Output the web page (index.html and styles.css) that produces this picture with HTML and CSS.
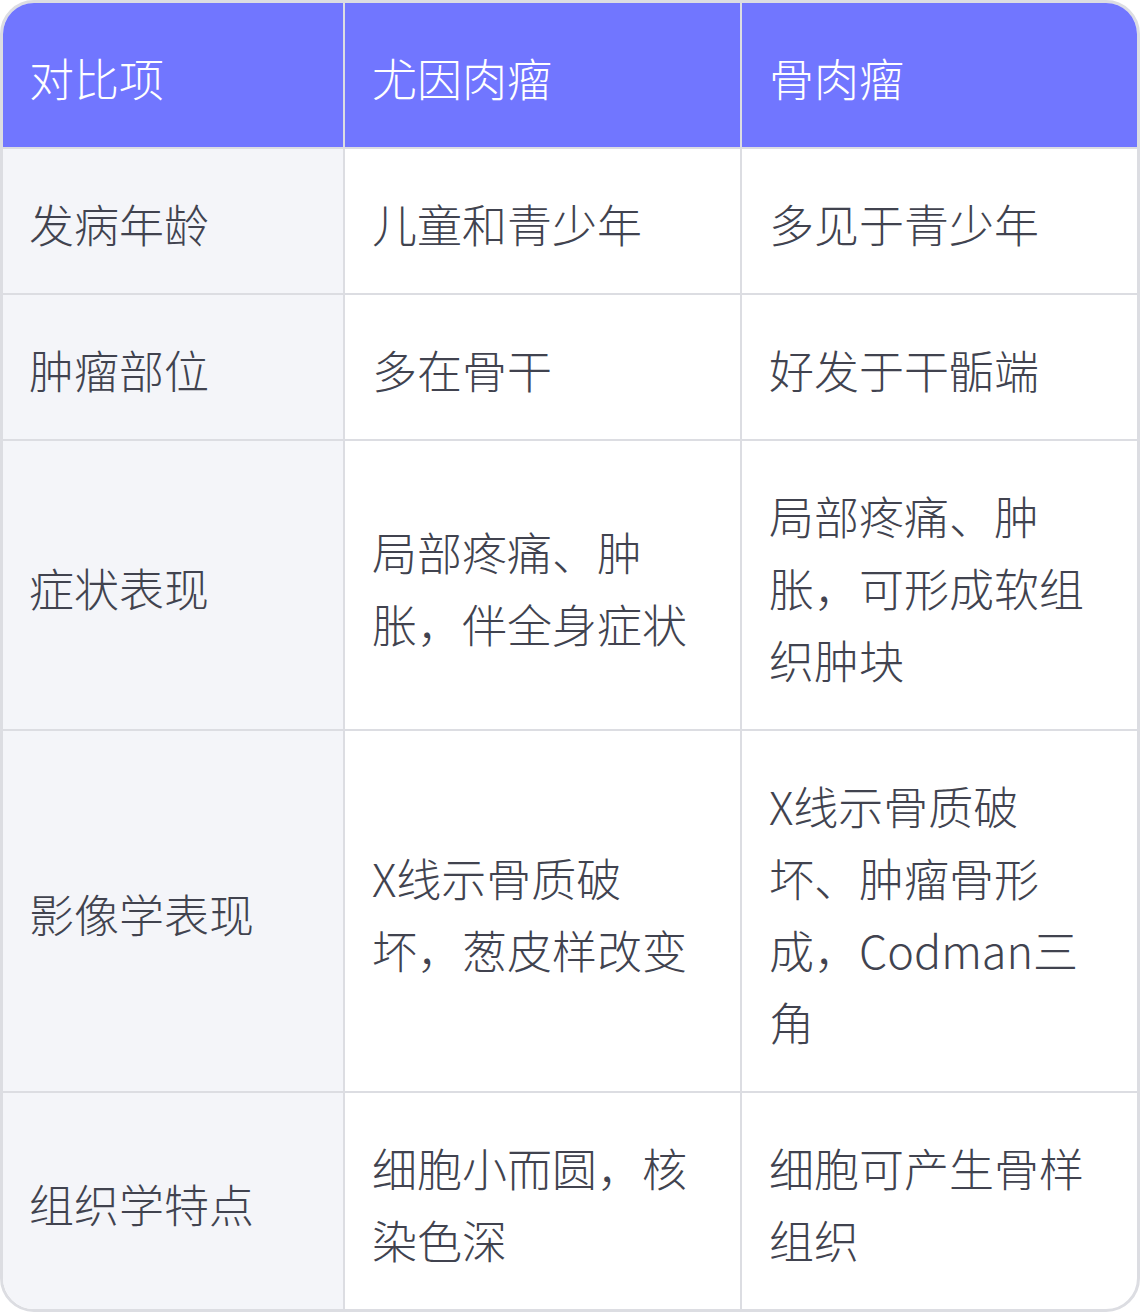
FILE: index.html
```html
<!DOCTYPE html>
<html lang="zh">
<head>
<meta charset="utf-8">
<link rel="stylesheet" href="styles.css">
</head>
<body>
<div class="wrap">
<table class="cmp">
<colgroup><col class="c1"><col class="c2"><col class="c3"></colgroup>
<thead>
<tr><th>对比项</th><th>尤因肉瘤</th><th>骨肉瘤</th></tr>
</thead>
<tbody>
<tr><td>发病年龄</td><td>儿童和青少年</td><td>多见于青少年</td></tr>
<tr><td>肿瘤部位</td><td>多在骨干</td><td>好发于干骺端</td></tr>
<tr><td>症状表现</td><td>局部疼痛、肿胀，伴全身症状</td><td>局部疼痛、肿胀，可形成软组织肿块</td></tr>
<tr><td>影像学表现</td><td>X线示骨质破坏，葱皮样改变</td><td>X线示骨质破坏、肿瘤骨形成，Codman三角</td></tr>
<tr><td>组织学特点</td><td>细胞小而圆，核染色深</td><td>细胞可产生骨样组织</td></tr>
</tbody>
</table>
</div>
</body>
</html>
```
FILE: styles.css
```css
html, body {
  margin: 0;
  padding: 0;
  background: #ffffff;
}
.wrap {
  width: 1140px;
  box-sizing: border-box;
  border: 3px solid #dcdde2;
  border-radius: 34px;
  overflow: hidden;
  background: #ffffff;
}
.cmp {
  width: 100%;
  border-collapse: collapse;
  table-layout: fixed;
  font-family: "Noto Sans CJK SC", "Noto Sans", sans-serif;
  font-weight: 300;
  font-size: 45px;
  line-height: 72px;
  color: #41434f;
}
.c1 { width: 341px; }
.c2 { width: 397px; }
.c3 { width: 396px; }
.cmp th, .cmp td {
  text-align: left;
  vertical-align: middle;
  padding: 39px 44px 33px 27px;
  border: 2px solid #dcdde2;
}
.cmp tr > :first-child {
  border-left: none;
  padding-left: 26px;
}
.cmp tr > :last-child { border-right: none; }
.cmp thead th {
  border-top: none;
  background: #7176ff;
  color: #ffffff;
  font-weight: 300;
}
.cmp tbody tr:last-child td { border-bottom: none; }
.cmp tbody td:first-child {
  background: #f4f5f9;
}
```
